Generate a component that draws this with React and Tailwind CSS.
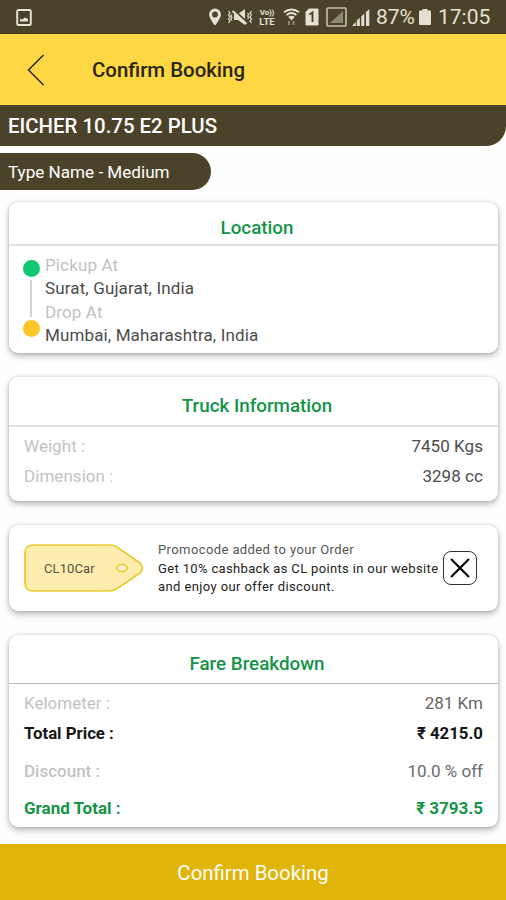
import React from 'react'

const truckInfo = [
  { label: 'Weight :', value: '7450 Kgs' },
  { label: 'Dimension :', value: '3298 cc' },
];

const StatusBar = () => (
  <div className="flex h-[34px] items-center border-b border-[#3a3420] bg-[#4b4329] pl-4 pr-4 pt-px text-[#e6e0d2]">
    <svg className="h-[17px] w-4" viewBox="0 0 16 17" fill="none">
      <rect x="1.2" y="1" width="13.6" height="15" rx="1.5" stroke="currentColor" strokeWidth="2" />
      <path d="M4 12.500V9.500l2 1 3-2 3 1.500v2.500z" fill="currentColor" />
    </svg>
    {/* location pin */}
    <svg className="ml-auto h-[18px] w-3" viewBox="0 0 12 18">
      <path fillRule="evenodd" fill="currentColor" d="M6 .5A5.9 5.900 0 0 0 .1 6.400C.1 10.500 6 17.500 6 17.500s5.900-7 5.900-11.100A5.900 5.900 0 0 0 6 .5zM6 3.600a2.900 2.900 0 1 1 0 5.800 2.900 2.900 0 0 1 0-5.800z" />
    </svg>
    {/* vibrate / mute */}
    <svg className="ml-[6px] h-[18px] w-[26px]" viewBox="0 0 26 18" fill="none" stroke="currentColor">
      <path d="M7 6h4l7-5v16l-7-5H7z" fill="currentColor" stroke="none" />
      <path d="M7 2l14 13" stroke="#4b4329" strokeWidth="1.800" />
      <path d="M5.500 3l14 13" strokeWidth="1.900" />
      <path d="M1.500 3l1.500 2-1.500 2L3 9l-1.500 2L3 13l-1.500 2M5 6.500L3.800 8 5 9.500 3.800 11 5 12.500M24.500 3L23 5l1.500 2L23 9l1.500 2-1.500 2 1.500 2M20.500 5l1.200 1.500L20.500 8l1.200 1.500-1.200 1.500" strokeWidth="1.200" />
    </svg>
    <div className="ml-[5px] flex w-[18px] flex-col items-center text-[9.500px] leading-none font-bold">
      <span className="h-[9px] text-[8px] leading-[9px] tracking-[-0.2px]">Vo))</span>
      <span className="h-[9px] leading-[9px]">LTE</span>
    </div>
    {/* wifi with traffic arrows */}
    <svg className="ml-[7px] h-[18px] w-[17px]" viewBox="0 0 17 18" fill="none" stroke="currentColor" strokeWidth="2">
      <path d="M1 4.200C5.300.5 11.700.5 16 4.200M3.600 7c3-2.500 6.800-2.500 9.800 0M6 9.600c1.600-1.200 3.400-1.200 5 0" />
      <path d="M8.500 12.500L6.300 9.800h4.400z" fill="currentColor" stroke="none" />
      <path d="M6 13v4M10.500 13v4" stroke="#8f8871" strokeWidth="2" />
    </svg>
    {/* sim slot */}
    <svg className="ml-[5px] h-[18px] w-[14px]" viewBox="0 0 14 18">
      <path d="M4 .5h8.500a1 1 0 0 1 1 1v15a1 1 0 0 1-1 1h-11a1 1 0 0 1-1-1V4z" fill="currentColor" />
      <path d="M4.500 6.500L7.500 4.500V14" fill="none" stroke="#4b4329" strokeWidth="1.900" />
    </svg>
    <svg className="ml-[7px] h-[20px] w-[21px]" viewBox="0 0 21 20">
      <rect x="1" y="1" width="19" height="18" rx="1" fill="none" stroke="#c5bfae" strokeWidth="1.600" />
      <path d="M4 16L17 4v12z" fill="#8f8871" />
    </svg>
    <svg className="ml-[5px] h-[18px] w-[18px]" viewBox="0 0 18 18" fill="currentColor">
      <path d="M0 18l3.800-4v4zM4.800 12.500l3-2.800V18h-3zM9.300 8.500l3-3V18h-3zM14 4l3.300-3v17H14z" />
    </svg>
    <span className="ml-[6px] w-[39px] text-[21px] leading-none">87%</span>
    <svg className="ml-[4px] h-4 w-3" viewBox="0 0 12 16" fill="currentColor">
      <path d="M3.500 0h5v1.500H11a1 1 0 0 1 1 1V15a1 1 0 0 1-1 1H1a1 1 0 0 1-1-1V2.500a1 1 0 0 1 1-1h2.500z" />
    </svg>
    <span className="ml-[7px] w-[52px] text-[21px] leading-none">17:05</span>
  </div>
);

const Card = ({ title, className, line, children }) => (
  <div className={`ml-[9px] mr-2 rounded-[9px] bg-white shadow-[0_3px_6px_rgba(0,0,0,0.28),0_0_3px_rgba(0,0,0,0.16)] ${className}`}>
    {title && (
      <h2 className={`flex items-center justify-center pl-[7px] pt-[10px] text-[18.800px] font-medium text-[#149447] ${line}`}>
        {title}
      </h2>
    )}
    {children}
  </div>
);

const Row = ({ label, value, className }) => (
  <div className={`flex items-center justify-between ${className}`}>
    <span>{label}</span>
    <span>{value}</span>
  </div>
);

const App = () => {
  return (
    <div className="flex h-[900px] w-[506px] flex-col overflow-hidden bg-[#fefefe] font-['Roboto',sans-serif]">
      <StatusBar />

      <header className="flex h-[71px] items-center bg-[#fed844] pl-[27px]">
        <svg className="h-8 w-[18px]" viewBox="0 0 18 32" fill="none" stroke="#2b250f" strokeWidth="1.500">
          <path d="M16.500 1L1.500 16l15 15" />
        </svg>
        <h1 className="ml-[47px] pt-0.5 text-[20.400px] font-medium text-[#2a2512]">Confirm Booking</h1>
      </header>

      <div className="flex h-[41px] items-center rounded-br-[20px] bg-[#4b4329] pl-2 pt-0.5 text-[20.400px] font-medium text-white">
        EICHER 10.75 E2 PLUS
      </div>
      <div className="mt-[7px] flex h-[37px] w-[211px] items-center rounded-r-full bg-[#4b4329] pl-2 pt-0.5 text-[17.100px] text-white">
        Type Name - Medium
      </div>

      <Card title="Location" className="mt-3 h-[151px]" line="h-11 border-b-2 border-[#e2e2e2]">
        <div className="flex pl-[13px] pt-2">
          <div className="flex w-[18px] flex-col items-center pt-[6px]">
            <span className="size-[17px] rounded-full bg-[#0fc873]" />
            <span className="my-[3px] h-[37px] w-[2px] bg-[#d2d2d2]" />
            <span className="size-[17px] rounded-full bg-[#fdc527]" />
          </div>
          <div className="ml-[5px] text-[17px] leading-[23.300px] tracking-[0.13px] text-[#4c4c4c]">
            <p className="text-[#c2c2c2]">Pickup At</p>
            <p>Surat, Gujarat, India</p>
            <p className="text-[#c2c2c2]">Drop At</p>
            <p>Mumbai, Maharashtra, India</p>
          </div>
        </div>
      </Card>

      <Card title="Truck Information" className="mt-6 h-[124px]" line="h-[50px] border-b-2 border-[#e2e2e2]">
        <div className="px-[15px] pt-[5px] text-[17px]">
          {truckInfo.map((item) => (
            <Row
              key={item.label}
              label={<span className="text-[#c2c2c2]">{item.label}</span>}
              value={item.value}
              className="h-[30px] tracking-[0.05px] text-[#4c4c4c]"
            />
          ))}
        </div>
      </Card>

      <Card className="mt-6 flex h-[86px] items-center pl-[15px]">
        <div className="grid h-12 w-[121px] items-center">
          <svg className="col-start-1 row-start-1 h-12 w-[121px]" viewBox="0 0 121 48" fill="none" stroke="#e8cc2e" strokeWidth="1.700">
            <path d="M9 1h78q3 0 6 2l23 16q5 5 0 10L94 44q-4 3-8 3H9q-8 0-8-8V9q0-8 8-8z" fill="#ffedb0" />
            <ellipse cx="98" cy="24" rx="5" ry="3.500" fill="#fff6d5" />
          </svg>
          <span className="col-start-1 row-start-1 pl-[20px] pt-px text-[13px] tracking-[0.1px] text-[#55503f]">CL10Car</span>
        </div>
        <div className="ml-[13px] w-[285px] pt-0.5 text-[13px] leading-[18.500px] tracking-[0.35px] whitespace-nowrap text-[#222]">
          <p className="tracking-[0.4px] text-[#555]">Promocode added to your Order</p>
          <p>Get 10% cashback as CL points in our website</p>
          <p className="tracking-[0.4px]">and enjoy our offer discount.</p>
        </div>
        <button className="flex size-[34px] items-center justify-center rounded-[8px] border border-[#333] bg-white">
          <svg className="size-5" viewBox="0 0 20 20" stroke="#000" strokeWidth="2.200">
            <path d="M1 1l18 18M19 1L1 19" />
          </svg>
        </button>
      </Card>

      <Card title="Fare Breakdown" className="mt-6 h-[192px]" line="h-[49px] border-b border-[#bbb]">
        <div className="px-[15px] pt-[5px] text-[17px]">
          <Row label={<span className="text-[#c2c2c2]">Kelometer :</span>} value="281 Km" className="h-[30px] text-[#666]" />
          <Row label="Total Price :" value="₹ 4215.0" className="h-[30px] text-[16.800px] font-bold text-[#161616]" />
          <Row label={<span className="font-medium text-[#c2c2c2]">Discount :</span>} value="10.0 % off" className="mt-2 h-[30px] text-[#6b6b6b]" />
          <Row label="Grand Total :" value="₹ 3793.5" className="mt-[7px] h-[30px] font-bold text-[#149447]" />
        </div>
      </Card>

      <button className="mt-auto flex h-14 shrink-0 items-center justify-center bg-[#e1b409] pt-[3px] text-[20.400px] text-white">
        Confirm Booking
      </button>
    </div>
  );
}

export default App
